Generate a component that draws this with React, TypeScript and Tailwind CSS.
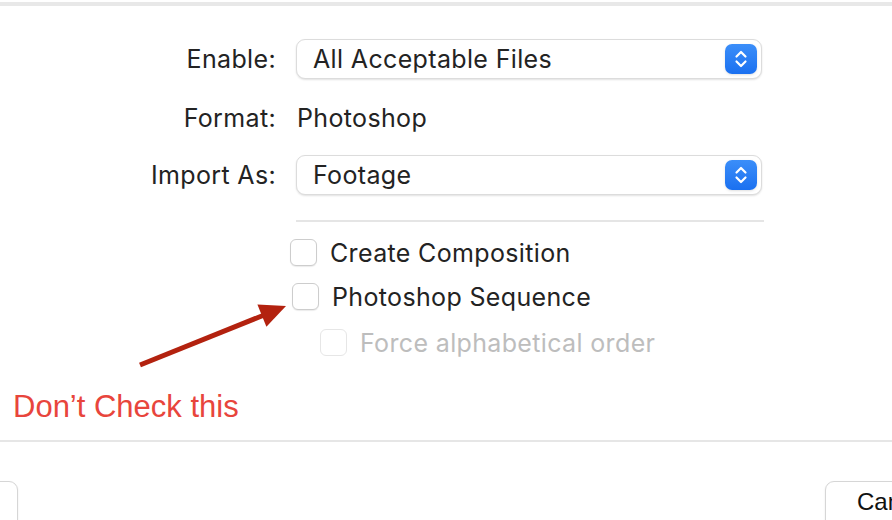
import React from "react";

function Stepper() {
  return (
    <span className="flex h-[30px] w-[32px] items-center justify-center rounded-[7px] bg-gradient-to-b from-[#3b8ef9] to-[#1a70f0] shadow-sm">
      <svg width="14" height="20" viewBox="0 0 14 20" fill="none">
        <path d="M2.5 7.5 L7 3 L11.5 7.5" stroke="white" strokeWidth="2.2" strokeLinecap="round" strokeLinejoin="round" />
        <path d="M2.5 12.5 L7 17 L11.5 12.5" stroke="white" strokeWidth="2.2" strokeLinecap="round" strokeLinejoin="round" />
      </svg>
    </span>
  );
}

function Select({ value }: { value: string }) {
  return (
    <div className="flex h-[40px] w-[466px] items-center justify-between rounded-[9px] border border-[#dcdcdc] bg-white pl-[16px] pr-[4px] shadow-[0_1px_2px_rgba(0,0,0,0.12)]">
      <span>{value}</span>
      <Stepper />
    </div>
  );
}

function Checkbox({ label, disabled, className }: { label: string; disabled?: boolean; className?: string }) {
  return (
    <div className={"flex h-[28px] items-center gap-[13px] " + (className ?? "")}>
      <span
        className={
          "h-[27px] w-[27px] shrink-0 rounded-[6px] border bg-white " +
          (disabled ? "border-[#e6e6e6]" : "border-[#cdcdcd] shadow-[0_1px_1px_rgba(0,0,0,0.08)]")
        }
      />
      <span className={"pt-[3px] " + (disabled ? "text-[#bdbdbd]" : "")}>{label}</span>
    </div>
  );
}

export default function App() {
  return (
    <div
      className="relative h-[520px] w-[892px] overflow-hidden bg-white text-[25px] leading-none tracking-[0.35px] text-[#232323]"
      style={{ fontFamily: "Inter, 'Noto Sans', sans-serif" }}
    >
      <div className="mt-[2px] h-[4px] bg-[#e8e8e8]" />

      {/* form */}
      <div className="mt-[33px] flex flex-col gap-[18px]">
        <div className="flex items-center">
          <span className="w-[277px] pr-[1px] text-right">Enable:</span>
          <span className="ml-[19px]">
            <Select value="All Acceptable Files" />
          </span>
        </div>
        <div className="flex h-[40px] items-center pt-[2px]">
          <span className="w-[277px] pr-[1px] text-right">Format:</span>
          <span className="ml-[20px]">Photoshop</span>
        </div>
        <div className="flex items-center">
          <span className="w-[277px] pr-[1px] text-right">Import As:</span>
          <span className="ml-[19px]">
            <Select value="Footage" />
          </span>
        </div>
      </div>

      <div className="ml-[296px] mt-[25px] h-[2px] w-[468px] bg-[#e5e5e5]" />

      <div className="flex flex-col">
        <Checkbox label="Create Composition" className="ml-[290px] mt-[16px]" />
        <Checkbox label="Photoshop Sequence" className="ml-[292px] mt-[16px]" />
        <Checkbox label="Force alphabetical order" disabled className="ml-[320px] mt-[18px]" />
      </div>

      <div
        className="ml-[13px] mt-[35px] h-[32px] text-[31px] leading-[32px] tracking-normal text-[#e8453c]"
        style={{ fontFamily: "'Liberation Sans', Arial, sans-serif" }}
      >
        Don’t Check this
      </div>

      <div className="mt-[17px] h-[2px] bg-[#e6e6e6]" />

      {/* bottom buttons */}
      <div className="mt-[39px] flex justify-between">
        <div className="-ml-[82px] h-[50px] w-[100px] rounded-[9px] border border-[#d6d6d6] bg-white shadow-[0_1px_2px_rgba(0,0,0,0.1)]" />
        <div
          className="-mr-[40px] flex h-[50px] w-[107px] items-start rounded-[9px] border border-[#d6d6d6] bg-white pl-[31px] pt-[8px] text-[24px] tracking-normal text-[#111] shadow-[0_1px_2px_rgba(0,0,0,0.1)]"
          style={{ fontFamily: "'Liberation Sans', Arial, sans-serif" }}
        >
          Cancel
        </div>
      </div>

      {/* annotation arrow */}
      <svg className="pointer-events-none absolute left-0 top-0" width="892" height="520">
        <line x1="140" y1="365" x2="263" y2="315.5" stroke="#b3220f" strokeWidth="5" />
        <polygon points="286,306 257.4,304.6 266.4,326.8" fill="#b3220f" />
      </svg>
    </div>
  );
}
